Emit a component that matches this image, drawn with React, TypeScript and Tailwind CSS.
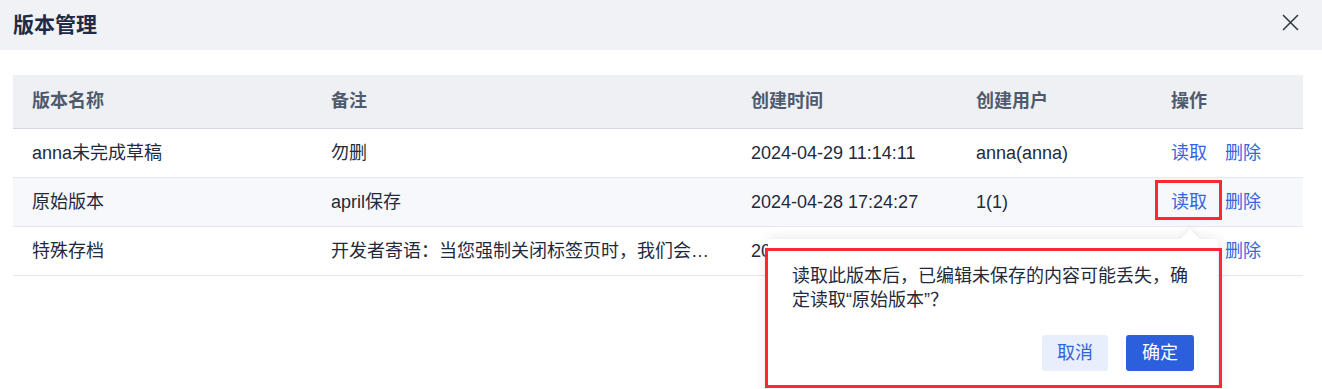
const rows = [
  { name: 'anna未完成草稿', note: '勿删', time: '2024-04-29 11:14:11', user: 'anna(anna)' },
  { name: '原始版本', note: 'april保存', time: '2024-04-28 17:24:27', user: '1(1)' },
  {
    name: '特殊存档',
    note: '开发者寄语：当您强制关闭标签页时，我们会自动为您保存一份草稿',
    time: '2024-04-27 09:30:12',
    user: 'admin(admin)',
  },
]

const cols = 'grid grid-cols-[299px_420px_225px_195px_151px]'

export default function App() {
  return (
    <div
      className="relative w-full h-[389px] overflow-hidden bg-white text-[18px] text-[#1f2a3d]"
      style={{ fontFamily: '"Liberation Sans", "Noto Sans CJK SC", sans-serif' }}
    >
      {/* Title bar */}
      <div className="h-[50px] bg-[#f0f2f6] flex items-center justify-between pl-[13px] pr-[23px]">
        <h1 className="text-[21px] font-bold text-[#1f2b44]">版本管理</h1>
        <svg width="17" height="17" viewBox="0 0 17 17" className="mt-[-6px]">
          <path d="M1 1L16 16M16 1L1 16" stroke="#2f3747" strokeWidth="1.5" />
        </svg>
      </div>

      {/* Table */}
      <div className="mt-[25px] mx-[13px] w-[1290px]">
        <div className={`${cols} h-[54px] items-center bg-[#eef0f4] border-b border-[#d3d7df] font-bold text-[#4f5a6e]`}>
          <div className="pl-[19px]">版本名称</div>
          <div className="pl-[19px]">备注</div>
          <div className="pl-[19px]">创建时间</div>
          <div className="pl-[19px]">创建用户</div>
          <div className="pl-[19px]">操作</div>
        </div>
        {rows.map((r, i) => (
          <div
            key={r.name}
            className={`${cols} h-[49px] items-center border-b border-[#e5e8ee] ${i === 1 ? 'bg-[#f7f8fb]' : 'bg-white'}`}
          >
            <div className="pl-[19px]">{r.name}</div>
            <div className="px-[19px] truncate">{r.note}</div>
            <div className="pl-[19px]">{r.time}</div>
            <div className="pl-[19px]">{r.user}</div>
            <div className="pl-[19px] flex gap-[18px] text-[#3566dd]">
              <span>读取</span>
              <span>删除</span>
            </div>
          </div>
        ))}
      </div>

      {/* Confirm popover */}
      <div className="absolute left-[768px] top-[239px] w-[450px] bg-white rounded-[4px] shadow-[0_2px_14px_rgba(30,40,60,0.16)] px-[24px] pt-[25px] pb-[24px]">
        <div className="absolute right-[21px] top-[-7px] w-[14px] h-[14px] bg-white rotate-45 shadow-[-2px_-2px_5px_rgba(30,40,60,0.06)]" />
        <p className="relative leading-[24px] text-[#1f2a3d]">
          读取此版本后，已编辑未保存的内容可能丢失，确定读取“原始版本”？
        </p>
        <div className="relative mt-[23px] flex justify-end gap-[18px]">
          <button className="w-[66px] h-[36px] rounded-[3px] bg-[#e8eefc] text-[#3563d9]">取消</button>
          <button className="w-[68px] h-[36px] rounded-[3px] bg-[#2c5fdb] text-white">确定</button>
        </div>
      </div>

      {/* Highlight marks */}
      <div className="absolute left-[1155px] top-[180px] w-[67px] h-[40px] border-[3px] border-[#ff2732]" />
      <div className="absolute left-[765px] top-[248px] w-[457px] h-[140px] border-[3px] border-[#ff2732]" />
    </div>
  )
}
